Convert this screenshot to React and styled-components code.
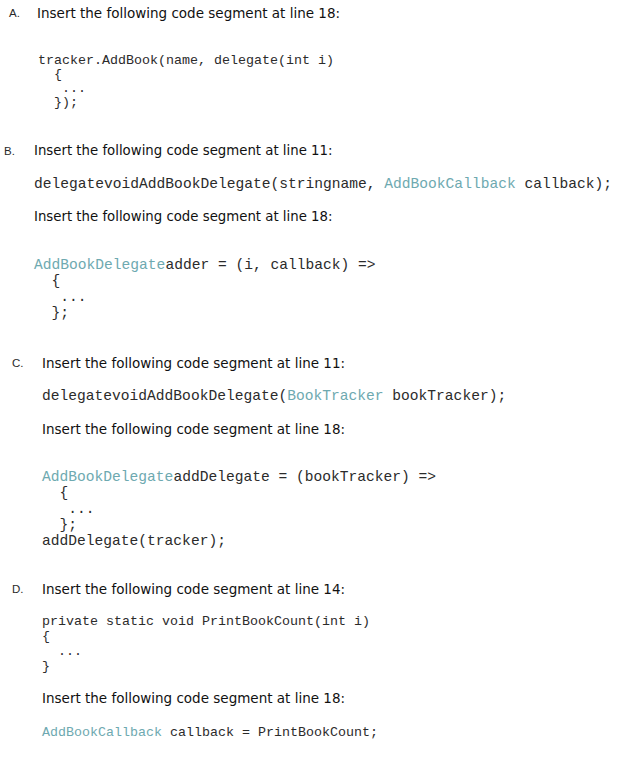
import React from "react";
import styled, { createGlobalStyle } from "styled-components";

const GlobalStyle = createGlobalStyle`
  html, body {
    margin: 0;
    padding: 0;
    background: #ffffff;
  }
  body {
    width: 622px;
    height: 757px;
    overflow: hidden;
  }
`;

const Page = styled.div`
  display: flex;
  flex-direction: column;
  padding-top: ${(p) => p.$top}px;
`;

const Option = styled.section`
  display: flex;
  align-items: flex-start;
  margin-top: ${(p) => p.$gap || 0}px;
`;

const Label = styled.div`
  width: ${(p) => p.$width}px;
  padding-left: ${(p) => p.$left}px;
  box-sizing: border-box;
  font-family: "Liberation Sans", Arial, sans-serif;
  font-size: 11.5px;
  line-height: 16px;
  color: #2a2a2a;
  flex-shrink: 0;
`;

const Body = styled.div`
  display: flex;
  flex-direction: column;
`;

const Prompt = styled.p`
  margin: ${(p) => p.$gap || 0}px 0 0;
  font-family: "DejaVu Sans", Verdana, sans-serif;
  font-size: ${(p) => p.$size || 13.5}px;
  line-height: 16px;
  color: #111;
  white-space: nowrap;
`;

const Code = styled.div`
  display: flex;
  flex-direction: column;
  margin-top: ${(p) => p.$gap || 0}px;
  padding-left: ${(p) => p.$indent || 0}px;
  font-family: "Liberation Mono", "Courier New", monospace;
  font-size: ${(p) => p.$size}px;
  line-height: ${(p) => p.$lh}px;
  color: #2b2b2b;
`;

const Line = styled.div`
  white-space: pre;
  padding-left: ${(p) => (p.$in || 0) * 0.6}em;
`;

const Type = styled.span`
  color: #6ea9b0;
`;

const App = () => (
  <>
    <GlobalStyle />
    <Page $top={5}>
      <Option>
        <Label $width={37} $left={9}>A.</Label>
        <Body>
          <Prompt>Insert the following code segment at line 18:</Prompt>
          <Code $gap={33} $indent={1} $size={13.33} $lh={14}>
            <Line>tracker.AddBook(name, delegate(int i)</Line>
            <Line $in={2}>{"{"}</Line>
            <Line $in={3}>...</Line>
            <Line $in={2}>{"});"}</Line>
          </Code>
        </Body>
      </Option>

      <Option $gap={33}>
        <Label $width={34} $left={4}>B.</Label>
        <Body>
          <Prompt $size={13.3}>Insert the following code segment at line 11:</Prompt>
          <Code $gap={17} $size={14.6} $lh={16}>
            <Line>
              delegatevoidAddBookDelegate(stringname, <Type>AddBookCallback</Type> callback);
            </Line>
          </Code>
          <Prompt $gap={17} $size={13.3}>Insert the following code segment at line 18:</Prompt>
          <Code $gap={32} $size={14.6} $lh={16}>
            <Line>
              <Type>AddBookDelegate</Type>adder = (i, callback) =&gt;
            </Line>
            <Line $in={2}>{"{"}</Line>
            <Line $in={3}>...</Line>
            <Line $in={2}>{"};"}</Line>
          </Code>
        </Body>
      </Option>

      <Option $gap={34}>
        <Label $width={42} $left={12}>C.</Label>
        <Body>
          <Prompt>Insert the following code segment at line 11:</Prompt>
          <Code $gap={17} $size={14.6} $lh={16}>
            <Line>
              delegatevoidAddBookDelegate(<Type>BookTracker</Type> bookTracker);
            </Line>
          </Code>
          <Prompt $gap={17}>Insert the following code segment at line 18:</Prompt>
          <Code $gap={32} $size={14.6} $lh={16}>
            <Line>
              <Type>AddBookDelegate</Type>addDelegate = (bookTracker) =&gt;
            </Line>
            <Line $in={2}>{"{"}</Line>
            <Line $in={3}>...</Line>
            <Line $in={2}>{"};"}</Line>
            <Line>addDelegate(tracker);</Line>
          </Code>
        </Body>
      </Option>

      <Option $gap={32}>
        <Label $width={42} $left={12}>D.</Label>
        <Body>
          <Prompt>Insert the following code segment at line 14:</Prompt>
          <Code $gap={17} $size={13.33} $lh={15}>
            <Line>private static void PrintBookCount(int i)</Line>
            <Line>{"{"}</Line>
            <Line $in={2}>...</Line>
            <Line>{"}"}</Line>
          </Code>
          <Prompt $gap={16}>Insert the following code segment at line 18:</Prompt>
          <Code $gap={19} $size={13.33} $lh={15}>
            <Line>
              <Type>AddBookCallback</Type> callback = PrintBookCount;
            </Line>
          </Code>
        </Body>
      </Option>
    </Page>
  </>
);

export default App;
